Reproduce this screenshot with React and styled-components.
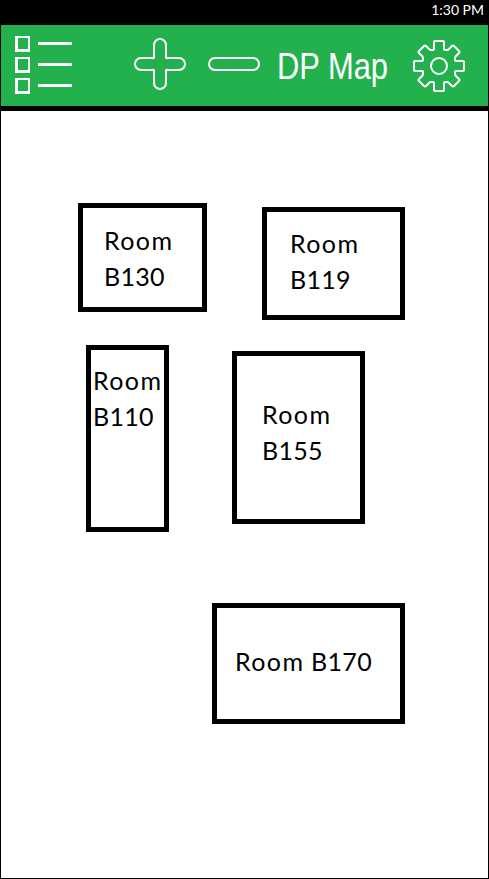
import React from 'react';
import styled, { createGlobalStyle } from 'styled-components';

const GlobalStyle = createGlobalStyle`
  * { box-sizing: border-box; }
  body { margin: 0; background: #fff; }
`;

const Phone = styled.main`
  width: 489px;
  height: 879px;
  display: flex;
  flex-direction: column;
  border: 1px solid #000;
  background: #fff;
  color: #000;
  font-family: Lato, "Open Sans", sans-serif;
  overflow: hidden;
`;

const StatusBar = styled.header`
  height: 24px;
  flex: none;
  display: flex;
  justify-content: flex-end;
  padding: 0 4px 0 0;
  background: #000;
  color: #fff;
  font-size: 14px;
  line-height: 18px;
`;

const Toolbar = styled.nav`
  height: 86px;
  flex: none;
  display: flex;
  align-items: flex-start;
  padding: 10px 0 0 13px;
  background: #22b14c;
  border-bottom: 5px solid #000;
`;

const IconButton = styled.button`
  display: block;
  flex: none;
  width: ${(p) => p.$width}px;
  height: 60px;
  margin: 0 ${(p) => p.$gap || 0}px 0 0;
  padding: 0;
  border: 0;
  background: none;
`;

const Icon = styled.svg`
  display: block;
  fill: none;
  stroke: #fff;
  stroke-width: 2;
  stroke-linejoin: round;
`;

const Title = styled.h1`
  width: 135px;
  flex: none;
  margin: 12px 0 0 1px;
  color: #fff;
  font: 400 36px/40px "Liberation Sans", Arial, sans-serif;
  white-space: nowrap;
  transform: scaleX(0.858);
  transform-origin: left top;
`;

const MapCanvas = styled.section`
  position: relative;
  flex: 1;
`;

const Room = styled.div`
  position: absolute;
  left: ${(p) => p.$x}px;
  top: ${(p) => p.$y}px;
  width: ${(p) => p.$w}px;
  height: ${(p) => p.$h}px;
  padding: ${(p) => p.$padY}px 0 0 ${(p) => p.$padX}px;
  border: 5px solid #000;
`;

const RoomLabel = styled.div`
  font-size: 25px;
  line-height: 36px;
  letter-spacing: 0.3px;
  white-space: pre;
`;

const RoomWord = styled.span`
  letter-spacing: 1.4px;
`;

const rooms = [
  { code: 'B130', x: 77, y: 92, w: 129, h: 109, padX: 21, padY: 14 },
  { code: 'B119', x: 261, y: 96, w: 143, h: 113, padX: 23, padY: 13 },
  { code: 'B110', x: 85, y: 234, w: 83, h: 187, padX: 2, padY: 12 },
  { code: 'B155', x: 231, y: 240, w: 133, h: 173, padX: 25, padY: 40 },
  { code: 'B170', x: 211, y: 492, w: 193, h: 121, padX: 18, padY: 35, inline: true },
];

const ListIcon = () => (
  <Icon width="60" height="60" shapeRendering="crispEdges">
    {[0, 21, 42].map((y) => (
      <g key={y} transform={`translate(0 ${y})`}>
        <path d="M1 1H16V17H1ZM4 3V14H14V3Z" fill="#fff" fillRule="evenodd" stroke="none" />
        <path d="M24 7H58V10H24Z" fill="#fff" stroke="none" />
      </g>
    ))}
  </Icon>
);

const PlusIcon = () => (
  <Icon width="52" height="60">
    <path d="M20 23V10a6 6 0 0 1 12 0V23H45a6 6 0 0 1 0 12H32V48a6 6 0 0 1-12 0V35H7a6 6 0 0 1 0-12Z" />
  </Icon>
);

const MinusIcon = () => (
  <Icon width="52" height="60">
    <rect x="1" y="23" width="50" height="12" rx="6" />
  </Icon>
);

const GearIcon = () => (
  <Icon width="54" height="60" viewBox="-27 -31 54 60">
    {[0, 90, 180, 270].map((angle) => (
      <path
        key={angle}
        transform={`rotate(${angle})`}
        d="M-5-25H4Q5-25 5-24V-17Q5-16 6-16H8Q9-16 10-17L13-20Q14-21 15-20L20-15Q21-14 20-13L17-10Q16-9 16-8V-6Q16-5 17-5H24Q25-5 25-4"
      />
    ))}
    <circle r="8" />
  </Icon>
);

export default function App() {
  return (
    <>
      <GlobalStyle />
      <Phone>
        <StatusBar>1:30 PM</StatusBar>
        <Toolbar>
          <IconButton $width={60} $gap={60} aria-label="List"><ListIcon /></IconButton>
          <IconButton $width={52} $gap={22} aria-label="Zoom in"><PlusIcon /></IconButton>
          <IconButton $width={52} $gap={16} aria-label="Zoom out"><MinusIcon /></IconButton>
          <Title>DP Map</Title>
          <IconButton $width={54} aria-label="Settings"><GearIcon /></IconButton>
        </Toolbar>
        <MapCanvas>
          {rooms.map((r) => (
            <Room key={r.code} $x={r.x} $y={r.y} $w={r.w} $h={r.h} $padX={r.padX} $padY={r.padY}>
              <RoomLabel>
                <RoomWord>Room</RoomWord>
                {r.inline ? ' ' : '\n'}
                {r.code}
              </RoomLabel>
            </Room>
          ))}
        </MapCanvas>
      </Phone>
    </>
  );
}
